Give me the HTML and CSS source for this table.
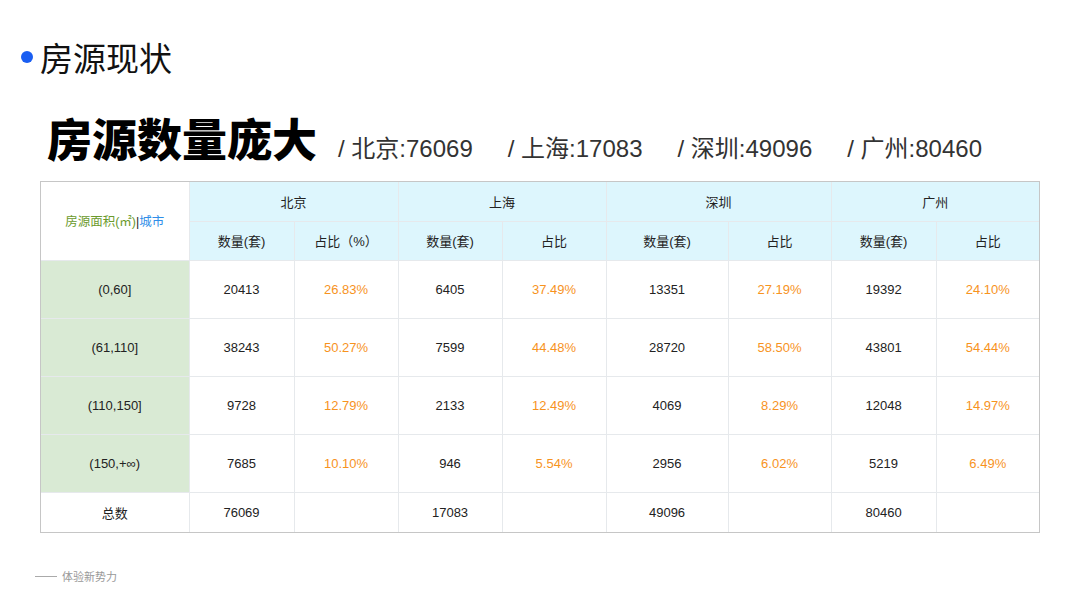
FILE: index.html
```html
<!DOCTYPE html>
<html lang="zh">
<head>
<meta charset="utf-8">
<title>房源现状</title>
<link rel="stylesheet" href="styles.css">
</head>
<body>
<div class="slide">
  <div class="section">
    <span class="dot"></span>
    <h1 class="section-title">房源现状</h1>
  </div>
  <div class="headline">
    <h2 class="big">房源数量庞大</h2>
    <div class="stats">
      <span class="stat">/ 北京:76069</span>
      <span class="stat">/ 上海:17083</span>
      <span class="stat">/ 深圳:49096</span>
      <span class="stat">/ 广州:80460</span>
    </div>
  </div>
  <div class="table-wrap">
  <table class="grid">
    <colgroup>
      <col class="c0"><col class="c1"><col class="c2"><col class="c3"><col class="c4"><col class="c5"><col class="c6"><col class="c7"><col class="c8">
    </colgroup>
    <thead>
      <tr class="h1">
        <th rowspan="2" class="corner"><span class="g">房源面积(㎡)</span><span class="bar">|</span><span class="b">城市</span></th>
        <th colspan="2" class="hd">北京</th>
        <th colspan="2" class="hd">上海</th>
        <th colspan="2" class="hd">深圳</th>
        <th colspan="2" class="hd">广州</th>
      </tr>
      <tr class="h2">
        <th class="hd">数量(套)</th><th class="hd">占比（%）</th>
        <th class="hd">数量(套)</th><th class="hd">占比</th>
        <th class="hd">数量(套)</th><th class="hd">占比</th>
        <th class="hd">数量(套)</th><th class="hd">占比</th>
      </tr>
    </thead>
    <tbody>
      <tr class="row">
        <td class="range">(0,60]</td>
        <td>20413</td><td class="pct">26.83%</td>
        <td>6405</td><td class="pct">37.49%</td>
        <td>13351</td><td class="pct">27.19%</td>
        <td>19392</td><td class="pct">24.10%</td>
      </tr>
      <tr class="row">
        <td class="range">(61,110]</td>
        <td>38243</td><td class="pct">50.27%</td>
        <td>7599</td><td class="pct">44.48%</td>
        <td>28720</td><td class="pct">58.50%</td>
        <td>43801</td><td class="pct">54.44%</td>
      </tr>
      <tr class="row">
        <td class="range">(110,150]</td>
        <td>9728</td><td class="pct">12.79%</td>
        <td>2133</td><td class="pct">12.49%</td>
        <td>4069</td><td class="pct">8.29%</td>
        <td>12048</td><td class="pct">14.97%</td>
      </tr>
      <tr class="row">
        <td class="range">(150,+∞)</td>
        <td>7685</td><td class="pct">10.10%</td>
        <td>946</td><td class="pct">5.54%</td>
        <td>2956</td><td class="pct">6.02%</td>
        <td>5219</td><td class="pct">6.49%</td>
      </tr>
      <tr class="total">
        <td>总数</td>
        <td>76069</td><td></td>
        <td>17083</td><td></td>
        <td>49096</td><td></td>
        <td>80460</td><td></td>
      </tr>
    </tbody>
  </table>
  </div>
  <div class="footer"><span class="line"></span><span>体验新势力</span></div>
</div>
</body>
</html>
```

FILE: styles.css
```css
* { box-sizing: border-box; }
html, body { margin: 0; padding: 0; background: #fff; }
body {
  width: 1080px;
  height: 606px;
  overflow: hidden;
  font-family: "Liberation Sans", "Noto Sans CJK SC", sans-serif;
  color: #222;
}
.slide {
  padding: 37px 0 0 0;
}
.section {
  display: flex;
  align-items: center;
  padding-left: 21px;
  height: 40px;
}
.dot {
  width: 12px;
  height: 12px;
  border-radius: 50%;
  background: #1a5ef2;
  margin-right: 7px;
}
.section-title {
  margin: 0;
  font-family: "Noto Sans CJK SC", sans-serif;
  font-weight: 400;
  font-size: 33px;
  line-height: 40px;
  color: #111;
}
.headline {
  display: flex;
  align-items: baseline;
  padding-left: 47px;
  margin-top: 33px;
  height: 71px;
}
.big {
  margin: 0;
  font-family: "Noto Sans CJK SC", sans-serif;
  font-weight: 900;
  font-size: 45px;
  line-height: 56px;
  color: #000;
}
.stats {
  display: flex;
  gap: 35px;
  margin-left: 21px;
}
.stat {
  font-family: "Liberation Sans", "Noto Sans CJK SC", sans-serif;
  font-size: 24px;
  color: #333;
}
.table-wrap {
  margin-left: 40px;
  width: 1000px;
  border: 1px solid #c6c6c6;
}
.grid {
  width: 100%;
  border-collapse: collapse;
  border-style: hidden;
  table-layout: fixed;
  font-size: 13px;
}
.c0 { width: 148px; }
.c1 { width: 105px; }
.c2 { width: 104px; }
.c3 { width: 104px; }
.c4 { width: 104px; }
.c5 { width: 122px; }
.c6 { width: 103px; }
.c7 { width: 105px; }
.c8 { width: 103px; }
.grid th, .grid td {
  border: 1px solid #e6e9ec;
  text-align: center;
  vertical-align: middle;
  padding: 0;
  font-weight: 400;
  color: #222;
}
.grid .hd { background: #ddf6fd; }
.h1 th, .h2 th { height: 39px; }
.corner { background: #fff; font-size: 12.5px; }
.corner .g { color: #6b9a2c; }
.corner .bar { color: #222; }
.corner .b { color: #2f8ee8; }
.row td { height: 58px; }
.grid .range { background: #d9ead4; }
.grid .pct { color: #f7931e; }
.total td { height: 40px; }
.footer {
  display: flex;
  align-items: center;
  margin: 35px 0 0 35px;
  font-family: "Noto Sans CJK SC", sans-serif;
  font-size: 11px;
  color: #999;
}
.footer .line {
  width: 22px;
  height: 1px;
  background: #aaa;
  margin-right: 5px;
}
```
